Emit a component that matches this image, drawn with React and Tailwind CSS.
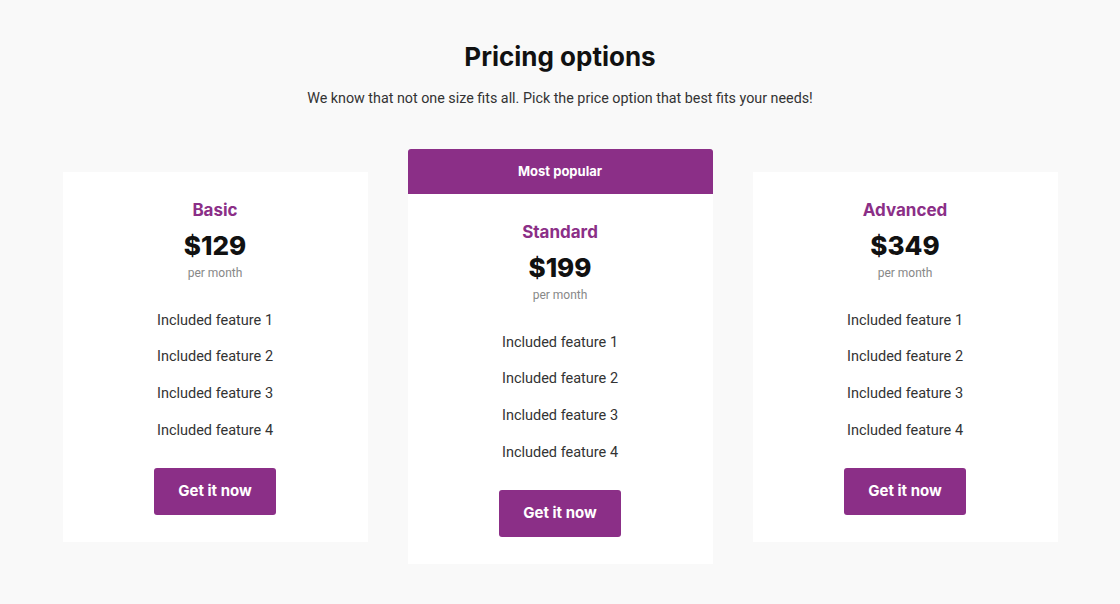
import React from "react";

const plans = [
  { name: "Basic", price: "$129" },
  { name: "Standard", price: "$199", popular: true },
  { name: "Advanced", price: "$349" },
];

const features = ["Included feature 1", "Included feature 2", "Included feature 3", "Included feature 4"];

function Card({ plan }) {
  return (
    <div className={`w-[305px] bg-white flex flex-col ${plan.popular ? "" : "mt-[23px]"}`}>
      {plan.popular && (
        <div className="h-[45px] bg-[#8b2f87] rounded-t-[3px] flex items-center justify-center text-white text-[13px] font-bold font-['Inter',sans-serif]">
          Most popular
        </div>
      )}
      <div className="pt-[26px] pb-[27px] flex flex-col items-center">
        <h3 className="text-[17px] leading-[24px] font-bold text-[#8b2f87] font-['Inter',sans-serif]">{plan.name}</h3>
        <div className="mt-2 text-[26px] leading-[32px] font-extrabold text-[#111] font-['Inter',sans-serif]">{plan.price}</div>
        <div className="mt-[3px] text-[12px] leading-[16px] text-[#888]">per month</div>
        <ul className="mt-[21.6px] text-center text-[14.5px] text-[#333]">
          {features.map((f) => (
            <li key={f} className="leading-[36.7px]">{f}</li>
          ))}
        </ul>
        <button className="mt-[18.7px] w-[122px] h-[47px] rounded-[3px] bg-[#8b2f87] text-white text-[15px] font-bold font-['Inter',sans-serif]">
          Get it now
        </button>
      </div>
    </div>
  );
}

export default function App() {
  return (
    <div className="w-full min-h-[604px] bg-[#f9f9f9] font-['Roboto',sans-serif] flex flex-col items-center">
      <h1 className="mt-[40px] text-[26px] leading-[34px] font-bold text-[#111] font-['Inter',sans-serif]">Pricing options</h1>
      <p className="mt-[14px] text-[14.3px] leading-[20px] text-[#333]">
        We know that not one size fits all. Pick the price option that best fits your needs!
      </p>
      <div className="mt-[41px] flex items-start gap-[40px]">
        {plans.map((p) => (
          <Card key={p.name} plan={p} />
        ))}
      </div>
    </div>
  );
}
